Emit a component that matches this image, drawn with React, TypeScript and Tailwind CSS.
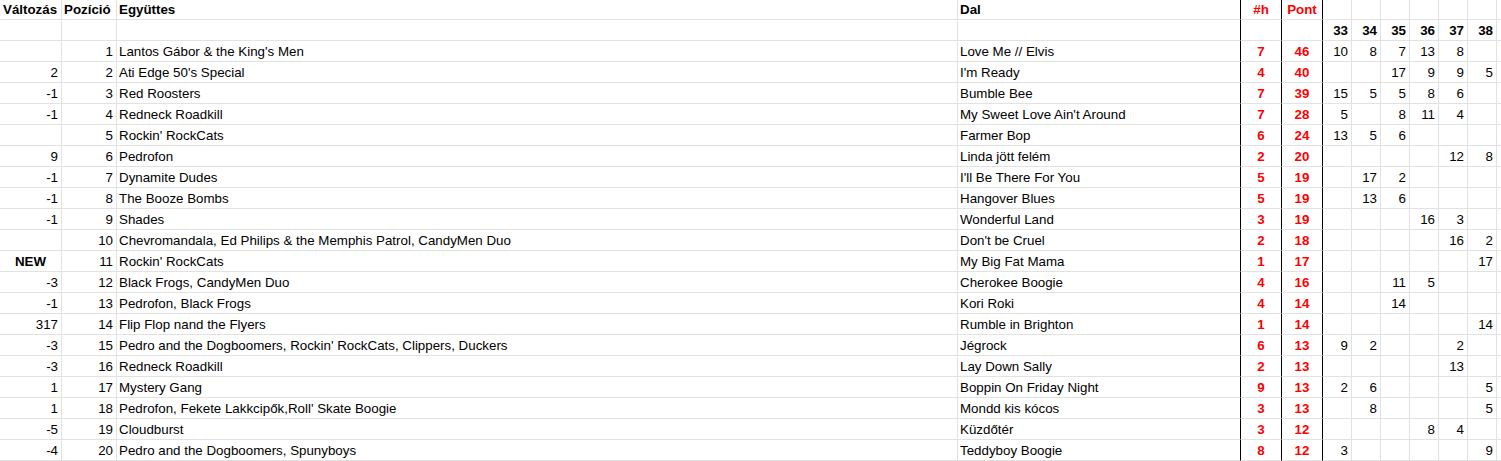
import React from 'react';

type Row = {
  chg: string;
  pos: number;
  band: string;
  song: string;
  h: number;
  pont: number;
  weeks: string[];
};

const rows: Row[] = [
  { chg: '', pos: 1, band: "Lantos Gábor & the King's Men", song: 'Love Me // Elvis', h: 7, pont: 46, weeks: ['10', '8', '7', '13', '8', ''] },
  { chg: '2', pos: 2, band: "Ati Edge 50's Special", song: "I'm Ready", h: 4, pont: 40, weeks: ['', '', '17', '9', '9', '5'] },
  { chg: '-1', pos: 3, band: 'Red Roosters', song: 'Bumble Bee', h: 7, pont: 39, weeks: ['15', '5', '5', '8', '6', ''] },
  { chg: '-1', pos: 4, band: 'Redneck Roadkill', song: "My Sweet Love Ain't Around", h: 7, pont: 28, weeks: ['5', '', '8', '11', '4', ''] },
  { chg: '', pos: 5, band: "Rockin' RockCats", song: 'Farmer Bop', h: 6, pont: 24, weeks: ['13', '5', '6', '', '', ''] },
  { chg: '9', pos: 6, band: 'Pedrofon', song: 'Linda jött felém', h: 2, pont: 20, weeks: ['', '', '', '', '12', '8'] },
  { chg: '-1', pos: 7, band: 'Dynamite Dudes', song: "I'll Be There For You", h: 5, pont: 19, weeks: ['', '17', '2', '', '', ''] },
  { chg: '-1', pos: 8, band: 'The Booze Bombs', song: 'Hangover Blues', h: 5, pont: 19, weeks: ['', '13', '6', '', '', ''] },
  { chg: '-1', pos: 9, band: 'Shades', song: 'Wonderful Land', h: 3, pont: 19, weeks: ['', '', '', '16', '3', ''] },
  { chg: '', pos: 10, band: 'Chevromandala, Ed Philips & the Memphis Patrol, CandyMen Duo', song: "Don't be Cruel", h: 2, pont: 18, weeks: ['', '', '', '', '16', '2'] },
  { chg: 'NEW', pos: 11, band: "Rockin' RockCats", song: 'My Big Fat Mama', h: 1, pont: 17, weeks: ['', '', '', '', '', '17'] },
  { chg: '-3', pos: 12, band: 'Black Frogs, CandyMen Duo', song: 'Cherokee Boogie', h: 4, pont: 16, weeks: ['', '', '11', '5', '', ''] },
  { chg: '-1', pos: 13, band: 'Pedrofon, Black Frogs', song: 'Kori Roki', h: 4, pont: 14, weeks: ['', '', '14', '', '', ''] },
  { chg: '317', pos: 14, band: 'Flip Flop nand the Flyers', song: 'Rumble in Brighton', h: 1, pont: 14, weeks: ['', '', '', '', '', '14'] },
  { chg: '-3', pos: 15, band: "Pedro and the Dogboomers, Rockin' RockCats, Clippers, Duckers", song: 'Jégrock', h: 6, pont: 13, weeks: ['9', '2', '', '', '2', ''] },
  { chg: '-3', pos: 16, band: 'Redneck Roadkill', song: 'Lay Down Sally', h: 2, pont: 13, weeks: ['', '', '', '', '13', ''] },
  { chg: '1', pos: 17, band: 'Mystery Gang', song: 'Boppin On Friday Night', h: 9, pont: 13, weeks: ['2', '6', '', '', '', '5'] },
  { chg: '1', pos: 18, band: "Pedrofon, Fekete Lakkcipők,Roll' Skate Boogie", song: 'Mondd kis kócos', h: 3, pont: 13, weeks: ['', '8', '', '', '', '5'] },
  { chg: '-5', pos: 19, band: 'Cloudburst', song: 'Küzdőtér', h: 3, pont: 12, weeks: ['', '', '', '8', '4', ''] },
  { chg: '-4', pos: 20, band: 'Pedro and the Dogboomers, Spunyboys', song: 'Teddyboy Boogie', h: 8, pont: 12, weeks: ['3', '', '', '', '', '9'] },
];

const weekNums = ['33', '34', '35', '36', '37', '38'];

const grid =
  'grid grid-cols-[62px_55px_841px_283px_41px_41px_29px_29px_29px_29px_29px_29px_1fr]';

// plain gridline cell
const cell = 'flex items-center border-r border-b border-[#e2e2e2] overflow-hidden whitespace-nowrap';
// cells with the black right edge (Dal, #h, Pont)
const darkCell = 'flex items-center border-r border-r-black border-b border-b-[#e2e2e2] overflow-hidden whitespace-nowrap';

export default function App() {
  return (
    <div
      className="w-[1501px] h-[461px] overflow-hidden bg-white text-[13.33px] leading-[15px] text-black"
      style={{ fontFamily: '"Liberation Sans", Arial, sans-serif' }}
    >
      <div className={grid}>
        {/* header row */}
        <div className={`${cell} h-[20px] pl-[3px] font-bold`}>Változás</div>
        <div className={`${cell} h-[20px] pl-[2px] font-bold`}>Pozíció</div>
        <div className={`${cell} h-[20px] pl-[2px] font-bold`}>Együttes</div>
        <div className={`${darkCell} h-[20px] pl-[2px] font-bold`}>Dal</div>
        <div className={`${darkCell} h-[20px] justify-center font-bold text-[#ff0000]`}>#h</div>
        <div className={`${darkCell} h-[20px] justify-center font-bold text-[#ff0000]`}>Pont</div>
        {weekNums.map(w => (
          <div key={w} className={`${cell} h-[20px]`} />
        ))}
        <div className={`${cell} h-[20px] border-r-0`} />

        {/* week numbers row */}
        <div className={`${cell} h-[21px]`} />
        <div className={`${cell} h-[21px]`} />
        <div className={`${cell} h-[21px]`} />
        <div className={`${darkCell} h-[21px]`} />
        <div className={`${darkCell} h-[21px]`} />
        <div className={`${darkCell} h-[21px]`} />
        {weekNums.map(w => (
          <div key={w} className={`${cell} h-[21px] justify-end pr-[3px] font-bold`}>{w}</div>
        ))}
        <div className={`${cell} h-[21px] border-r-0`} />

        {rows.map(r => (
          <React.Fragment key={r.pos}>
            {r.chg === 'NEW' ? (
              <div className={`${cell} h-[21px] justify-center font-bold`}>NEW</div>
            ) : (
              <div className={`${cell} h-[21px] justify-end pr-[3px]`}>{r.chg}</div>
            )}
            <div className={`${cell} h-[21px] justify-end pr-[3px]`}>{r.pos}</div>
            <div className={`${cell} h-[21px] pl-[2px]`}>{r.band}</div>
            <div className={`${darkCell} h-[21px] pl-[2px]`}>{r.song}</div>
            <div className={`${darkCell} h-[21px] justify-center font-bold text-[#ff0000]`}>{r.h}</div>
            <div className={`${darkCell} h-[21px] justify-center font-bold text-[#ff0000]`}>{r.pont}</div>
            {r.weeks.map((v, i) => (
              <div key={i} className={`${cell} h-[21px] justify-end pr-[3px]`}>{v}</div>
            ))}
            <div className={`${cell} h-[21px] border-r-0`} />
          </React.Fragment>
        ))}
      </div>
    </div>
  );
}
